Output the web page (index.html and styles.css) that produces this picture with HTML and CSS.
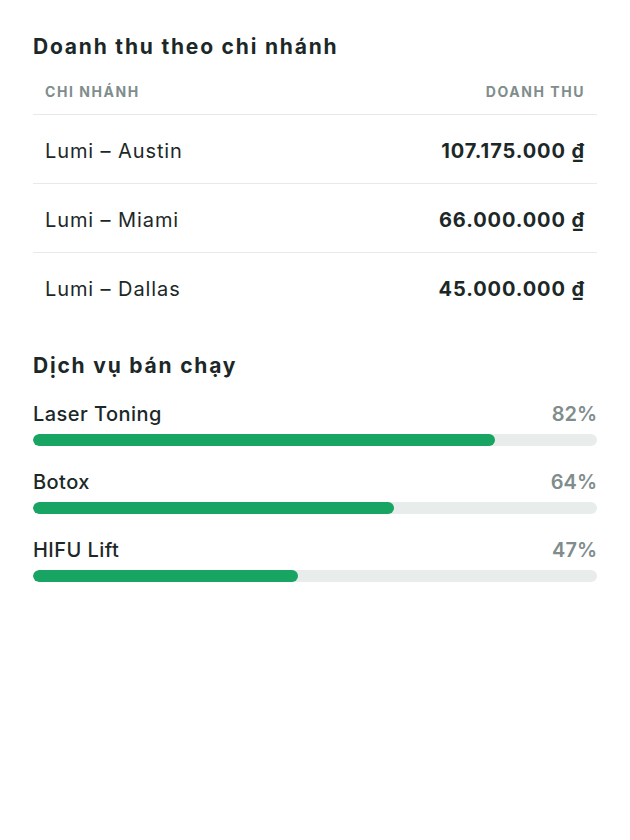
FILE: index.html
```html
<!DOCTYPE html>
<html lang="vi">
<head>
<meta charset="utf-8">
<link rel="stylesheet" href="styles.css">
</head>
<body>
<div class="panel">
  <h2 class="title">Doanh thu theo chi nhánh</h2>
  <table class="table">
    <thead>
      <tr><th class="left">Chi nhánh</th><th class="right">Doanh thu</th></tr>
    </thead>
    <tbody>
      <tr><td class="left">Lumi – Austin</td><td class="right amount">107.175.000 ₫</td></tr>
      <tr><td class="left">Lumi – Miami</td><td class="right amount">66.000.000 ₫</td></tr>
      <tr><td class="left">Lumi – Dallas</td><td class="right amount">45.000.000 ₫</td></tr>
    </tbody>
  </table>

  <h2 class="title title-2">Dịch vụ bán chạy</h2>
  <div class="services">
    <div class="service">
      <div class="service-head"><span class="name">Laser Toning</span><span class="pct">82%</span></div>
      <div class="track"><div class="fill" style="width:82%"></div></div>
    </div>
    <div class="service">
      <div class="service-head"><span class="name">Botox</span><span class="pct">64%</span></div>
      <div class="track"><div class="fill" style="width:64%"></div></div>
    </div>
    <div class="service">
      <div class="service-head"><span class="name">HIFU Lift</span><span class="pct">47%</span></div>
      <div class="track"><div class="fill" style="width:47%"></div></div>
    </div>
  </div>
</div>
</body>
</html>
```
FILE: styles.css
```css
* { box-sizing: border-box; }
html, body { margin: 0; background: #fff; }
body {
  font-family: "Inter", "Noto Sans", sans-serif;
  color: #1c2828;
}
.panel { padding: 33px 33px 0 33px; }
.title {
  margin: 0;
  font-size: 21px;
  font-weight: 700;
  line-height: 28px;
  letter-spacing: 1.8px;
}
.table {
  width: 100%;
  border-collapse: collapse;
  margin-top: 8px;
}
.table th {
  font-size: 14px;
  font-weight: 700;
  color: #808d8d;
  text-transform: uppercase;
  letter-spacing: 1.55px;
  padding: 14px 12px 13px;
  border-bottom: 1px solid #e5eaea;
  line-height: 18px;
}
.table th.right { padding-right: 12px; letter-spacing: 1.55px; }
.table td {
  font-size: 20px;
  line-height: 24px;
  padding: 24px 12px 20px;
  border-bottom: 1px solid #e5eaea;
  letter-spacing: 0.9px;
}
.table tbody tr:last-child td { border-bottom: none; }
.left { text-align: left; }
.right { text-align: right; }
.amount { font-weight: 700; }
.title-2 { margin-top: 31px; }
.services {
  display: flex;
  flex-direction: column;
  gap: 23px;
  margin-top: 21px;
}
.service-head {
  display: flex;
  justify-content: space-between;
  align-items: baseline;
  font-size: 20px;
  line-height: 26px;
}
.name { font-weight: 500; letter-spacing: 0.45px; }
.pct { color: #808d8d; font-weight: 600; }
.track {
  margin-top: 7px;
  height: 12px;
  border-radius: 6px;
  background: #e8edeb;
  overflow: hidden;
}
.fill {
  height: 100%;
  background: #18a463;
  border-radius: 6px;
}
```
